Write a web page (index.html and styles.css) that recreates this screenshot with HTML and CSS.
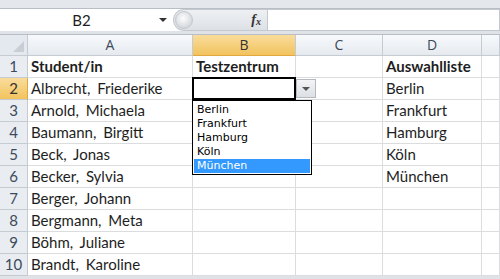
FILE: index.html
```html
<!DOCTYPE html>
<html lang="de">
<head>
  <meta charset="UTF-8" />
  <title>Testzentrum</title>
  <link rel="stylesheet" href="styles.css">
</head>
<body>
  <div class="topline"></div>
  <div class="formulabar">
    <div class="namebox">
      <span class="ref">B2</span>
      <span class="nb-arrow"></span>
    </div>
    <div class="fxzone">
      <span class="knob"></span>
      <span class="fx">f<sub>x</sub></span>
    </div>
    <div class="formula"></div>
  </div>
  <div class="gap"></div>

  <div class="sheet">
    <div class="corner"><span class="tri"></span></div>
    <div class="colhead">A</div>
    <div class="colhead active">B</div>
    <div class="colhead">C</div>
    <div class="colhead">D</div>
    <div class="colhead"></div>

    <div class="rowhead">1</div>
    <div class="cell bold">Student/in</div>
    <div class="cell bold">Testzentrum</div>
    <div class="cell"></div>
    <div class="cell bold">Auswahlliste</div>
    <div class="cell"></div>

    <div class="rowhead active">2</div>
    <div class="cell">Albrecht, Friederike</div>
    <div class="cell selected">
      <div class="dd-btn"><span></span></div>
      <ul class="dd-list">
        <li>Berlin</li>
        <li>Frankfurt</li>
        <li>Hamburg</li>
        <li>Köln</li>
        <li class="hl">München</li>
      </ul>
    </div>
    <div class="cell"></div>
    <div class="cell">Berlin</div>
    <div class="cell"></div>

    <div class="rowhead">3</div>
    <div class="cell">Arnold, Michaela</div>
    <div class="cell"></div>
    <div class="cell"></div>
    <div class="cell">Frankfurt</div>
    <div class="cell"></div>

    <div class="rowhead">4</div>
    <div class="cell">Baumann, Birgitt</div>
    <div class="cell"></div>
    <div class="cell"></div>
    <div class="cell">Hamburg</div>
    <div class="cell"></div>

    <div class="rowhead">5</div>
    <div class="cell">Beck, Jonas</div>
    <div class="cell"></div>
    <div class="cell"></div>
    <div class="cell">Köln</div>
    <div class="cell"></div>

    <div class="rowhead">6</div>
    <div class="cell">Becker, Sylvia</div>
    <div class="cell"></div>
    <div class="cell"></div>
    <div class="cell">München</div>
    <div class="cell"></div>

    <div class="rowhead">7</div>
    <div class="cell">Berger, Johann</div>
    <div class="cell"></div>
    <div class="cell"></div>
    <div class="cell"></div>
    <div class="cell"></div>

    <div class="rowhead">8</div>
    <div class="cell">Bergmann, Meta</div>
    <div class="cell"></div>
    <div class="cell"></div>
    <div class="cell"></div>
    <div class="cell"></div>

    <div class="rowhead">9</div>
    <div class="cell">Böhm, Juliane</div>
    <div class="cell"></div>
    <div class="cell"></div>
    <div class="cell"></div>
    <div class="cell"></div>

    <div class="rowhead">10</div>
    <div class="cell">Brandt, Karoline</div>
    <div class="cell"></div>
    <div class="cell"></div>
    <div class="cell"></div>
    <div class="cell"></div>
  </div>
</body>
</html>
```

FILE: styles.css
```css
body {
  margin: 0;
  width: 500px;
  height: 279px;
  overflow: hidden;
  background: #dfe3e8;
  font-family: Lato, "Open Sans", sans-serif;
  color: #1e1e1e;
}
.topline {
  height: 8px;
  background: #e4e7eb;
  border-bottom: 1px solid #b9bec6;
}
.formulabar {
  display: flex;
  height: 22px;
  background: #fff;
}
.namebox {
  width: 173px;
  display: flex;
  align-items: center;
  position: relative;
  font-size: 15px;
}
.namebox .ref {
  flex: 1;
  text-align: center;
  padding-left: 4px;
}
.nb-arrow {
  width: 0;
  height: 0;
  border-left: 4px solid transparent;
  border-right: 4px solid transparent;
  border-top: 4px solid #333;
  margin-right: 6px;
}
.fxzone {
  width: 94px;
  display: flex;
  align-items: center;
  justify-content: space-between;
  background: linear-gradient(#eef0f3, #dde1e6);
  border-radius: 11px 0 0 11px;
  border: 1px solid #c4c9d0;
  border-right: none;
  box-sizing: border-box;
}
.knob {
  width: 16px;
  height: 16px;
  border-radius: 50%;
  margin-left: 1px;
  background: radial-gradient(circle at 45% 40%, #fdfdfd, #d5d9de 70%);
  border: 1px solid #c3c8cf;
}
.fx {
  font-family: "Liberation Serif", serif;
  font-style: italic;
  font-weight: bold;
  font-size: 14px;
  color: #333;
  margin-right: 6px;
}
.fx sub {
  font-size: 10px;
  vertical-align: -1px;
}
.formula {
  flex: 1;
  border: 1px solid #c4c9d0;
  background: #fff;
}
.gap {
  height: 3px;
  background: #dfe3e8;
  border-bottom: 1px solid #b9bec6;
}
.sheet {
  display: grid;
  grid-template-columns: 28px 165px 103px 87px 99px 18px;
  grid-template-rows: 21px repeat(10, 22px);
  background: #fff;
}
.corner {
  background: #e4e9ef;
  border-right: 1px solid #c5cbd3;
  border-bottom: 1px solid #c5cbd3;
  position: relative;
}
.tri {
  position: absolute;
  right: 3px;
  bottom: 3px;
  width: 0;
  height: 0;
  border-left: 11px solid transparent;
  border-bottom: 11px solid #c9ced5;
}
.colhead {
  background: linear-gradient(#f7f9fb, #e6eaef);
  border-right: 1px solid #c5cbd3;
  border-bottom: 1px solid #c5cbd3;
  text-align: center;
  font-family: "Open Sans", sans-serif;
  font-size: 14px;
  line-height: 20px;
  color: #3b4a5c;
}
.colhead.active {
  background: linear-gradient(#f9dc9c, #f2c35e);
  border-bottom-color: #e0a83e;
  color: #333;
}
.rowhead {
  background: #e9edf2;
  border-right: 1px solid #c5cbd3;
  border-bottom: 1px solid #c5cbd3;
  text-align: center;
  font-size: 15px;
  line-height: 21px;
  color: #3b4a5c;
}
.rowhead.active {
  background: linear-gradient(#f9dc9c, #f2c35e);
  border-right-color: #e0a83e;
  color: #333;
}
.cell {
  border-right: 1px solid #dadcdd;
  border-bottom: 1px solid #dadcdd;
  font-size: 15px;
  line-height: 21px;
  padding-left: 3px;
  word-spacing: 3px;
  white-space: nowrap;
  overflow: visible;
}
.cell.bold {
  font-weight: bold;
}
.cell.selected {
  position: relative;
  border: 2px solid #000;
  margin: -1px 0 0 -1px;
  z-index: 2;
}
.dd-btn {
  position: absolute;
  left: 100%;
  top: 0;
  margin-left: 2px;
  width: 18px;
  height: 17px;
  background: linear-gradient(#f2f4f6, #dde0e4);
  border: 1px solid #b4b9c0;
  display: flex;
  align-items: center;
  justify-content: center;
}
.dd-btn span {
  width: 0;
  height: 0;
  border-left: 4px solid transparent;
  border-right: 4px solid transparent;
  border-top: 4px solid #555;
}
.dd-list {
  position: absolute;
  left: -2px;
  top: 100%;
  margin: 2px 0 0 0;
  padding: 2px 1px 1px 1px;
  width: 120px;
  list-style: none;
  background: #fff;
  border: 1px solid #000;
  font-family: "DejaVu Sans", sans-serif;
  font-size: 11px;
  word-spacing: 0;
  box-sizing: border-box;
}
.dd-list li {
  height: 14px;
  line-height: 14px;
  padding-left: 3px;
  color: #000;
}
.dd-list li.hl {
  background: #3399ff;
  color: #fff;
}
```
